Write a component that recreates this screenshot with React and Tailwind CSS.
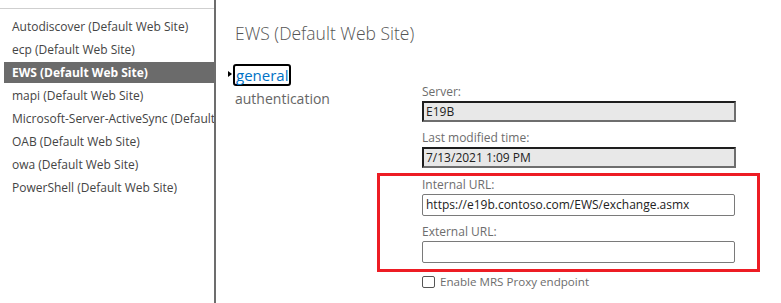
import React from 'react'

const sites = [
  'Autodiscover (Default Web Site)',
  'ecp (Default Web Site)',
  'EWS (Default Web Site)',
  'mapi (Default Web Site)',
  'Microsoft-Server-ActiveSync (Default Web Site)',
  'OAB (Default Web Site)',
  'owa (Default Web Site)',
  'PowerShell (Default Web Site)'
]

const font = { fontFamily: '"Open Sans", "Noto Sans", Arial, sans-serif' }

const ReadOnlyField = ({ label, value }) => (
  <div className="mb-[7px]">
    <div className="h-[18px] text-[12px] leading-[18px] text-[#6d6d6d]">{label}</div>
    <div className="w-[314px] h-[21px] bg-[#e8e8e8] border-2 border-t-[#1e1e1e] border-l-[#1e1e1e] border-b-[#6e6e6e] border-r-[#6e6e6e] px-[2px] text-[12px] leading-[17px] text-[#222]">
      {value}
    </div>
  </div>
)

const UrlField = ({ label, value, last }) => (
  <div className={last ? '' : 'mb-[7px]'}>
    <div className="h-[18px] text-[12px] leading-[18px] text-[#6d6d6d]">{label}</div>
    <div className="w-[313px] h-[22px] bg-white border border-[#7a7a7a] rounded-[2px] px-[3px] text-[12px] leading-[20px] text-[#222]">
      {value}
    </div>
  </div>
)

export default function App() {
  return (
    <div className="w-[781px] h-[303px] bg-white flex overflow-hidden" style={font}>
      {/* Site list */}
      <div className="w-[216px] h-full border-r-2 border-[#6d6d6d] pt-[8px] overflow-hidden">
        <div className="border-t border-[#cfcfcf] pt-[6px]">
          {sites.map((s) => (
            <div key={s} className="py-px">
              <div
                className={`h-[21px] ml-1 pl-2 text-[12px] leading-[21px] whitespace-nowrap overflow-hidden ${
                  s.startsWith('EWS') ? 'bg-[#6b6b6b] text-white font-bold' : 'text-[#444]'
                }`}
              >
                {s}
              </div>
            </div>
          ))}
        </div>
      </div>

      {/* Details */}
      <div className="flex-1 pl-[19px]">
        <div className="h-[63px] pt-[20px] text-[17.5px] leading-[26px] font-light text-[#555]">
          EWS (Default Web Site)
        </div>

        <div className="flex">
          {/* Tabs */}
          <div className="w-[187px] relative">
            <span className="absolute -left-[7px] top-[8px] w-0 h-0 border-y-[3.5px] border-y-transparent border-l-[4px] border-l-black" />
            <div className="inline-block -ml-[2px] border-2 border-black rounded-[3px] px-px text-[15px] leading-[18px] text-[#0072c6]">
              general
            </div>
            <div className="mt-[2px] text-[14px] leading-[20px] text-[#666]">authentication</div>
          </div>

          {/* Form */}
          <div className="pt-[20px]">
            <ReadOnlyField label="Server:" value="E19B" />
            <ReadOnlyField label="Last modified time:" value="7/13/2021 1:09 PM" />

            <div className="-ml-[45px] mt-[-2px] w-[383px] border-[3px] border-[#ed1c24] pl-[42px] pt-0 pb-[6px]">
              <UrlField label="Internal URL:" value="https://e19b.contoso.com/EWS/exchange.asmx" />
              <UrlField label="External URL:" value="" last />
            </div>

            <div className="flex items-center mt-[4px] h-[12px]">
              <span className="w-[13px] h-[12px] border border-[#555] rounded-[2px] bg-white" />
              <span className="ml-[5px] text-[11.6px] leading-[12px] text-[#6d6d6d]">Enable MRS Proxy endpoint</span>
            </div>
          </div>
        </div>
      </div>
    </div>
  )
}
